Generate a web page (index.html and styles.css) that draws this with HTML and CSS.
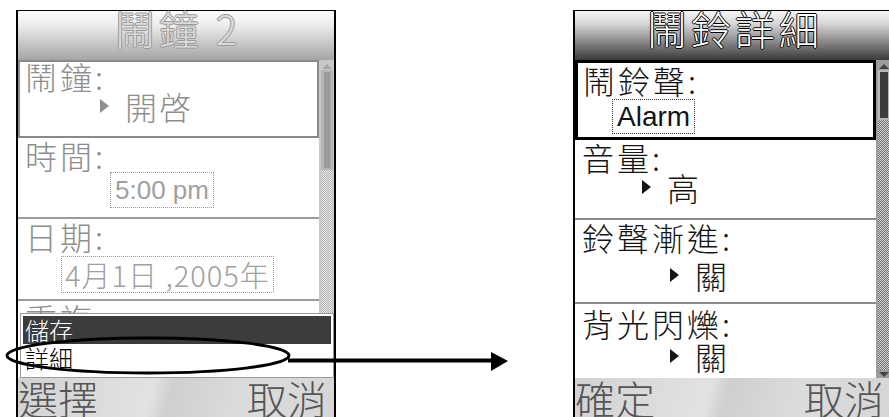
FILE: index.html
```html
<!DOCTYPE html>
<html>

<head>
    <meta charset="utf-8">
    <title>鬧鐘 2 - 鬧鈴詳細</title>
    <link rel="stylesheet" href="styles.css">
</head>

<body>
    <div class="stage">

        <!-- alarm screen with the options menu open -->
        <div class="phone dimmed">
            <div class="titlebar">鬧鐘 2</div>
            <div class="screen">
                <div class="list">
                    <div class="item selected a1">
                        <div class="label">鬧鐘:</div>
                        <div class="value"><i class="tri"></i>開啓</div>
                    </div>
                    <div class="item a2">
                        <div class="label">時間:</div>
                        <div class="value"><span class="field">5:00 pm</span></div>
                    </div>
                    <div class="item a3">
                        <div class="label">日期:</div>
                        <div class="value"><span class="field">4月1日 ,2005年</span></div>
                    </div>
                    <div class="item a4">
                        <div class="label">重複:</div>
                    </div>
                </div>
                <div class="scrollbar">
                    <div class="up"></div>
                    <div class="thumb"></div>
                    <div class="track"></div>
                </div>

                <div class="popup">
                    <div class="opt active">儲存</div>
                    <div class="opt">詳細</div>
                </div>
            </div>
            <div class="softkeys">
                <span>選擇</span>
                <span>取消</span>
            </div>
        </div>

        <!-- alarm details screen -->
        <div class="phone detail">
            <div class="titlebar">鬧鈴詳細</div>
            <div class="screen">
                <div class="list">
                    <div class="item selected b1">
                        <div class="label">鬧鈴聲:</div>
                        <div class="value"><span class="field">Alarm</span></div>
                    </div>
                    <div class="item b2">
                        <div class="label">音量:</div>
                        <div class="value"><i class="tri"></i>高</div>
                    </div>
                    <div class="item b3">
                        <div class="label">鈴聲漸進:</div>
                        <div class="value"><i class="tri"></i>關</div>
                    </div>
                    <div class="item b4">
                        <div class="label">背光閃爍:</div>
                        <div class="value"><i class="tri"></i>關</div>
                    </div>
                </div>
                <div class="scrollbar">
                    <div class="up"></div>
                    <div class="thumb"></div>
                    <div class="track"></div>
                    <div class="down"></div>
                </div>
            </div>
            <div class="softkeys">
                <span>確定</span>
                <span>取消</span>
            </div>
        </div>

        <!-- hand drawn marks: circle round the menu entry and the arrow -->
        <svg class="marks" width="889" height="417" viewBox="0 0 889 417">
            <ellipse cx="148" cy="355.5" rx="141" ry="17.5" fill="none" stroke="#000" stroke-width="3" />
            <line x1="288" y1="360.5" x2="494" y2="360.5" stroke="#000" stroke-width="4" />
            <polygon points="491,352 508,361 491,371" fill="#000" />
        </svg>
    </div>
</body>

</html>
```

FILE: styles.css
```css
html,
body {
    margin: 0;
    background: #fff;
}

body {
    width: 889px;
    height: 417px;
    overflow: hidden;
    font-family: "Noto Sans CJK TC", "Noto Sans", sans-serif;
    font-weight: 300;
}

.stage {
    position: relative;
    display: flex;
    gap: 237px;
    height: 417px;
    padding: 10px 0 0 16px;
    box-sizing: border-box;
}

.phone {
    flex: none;
    width: 320px;
    height: 407px;
    display: flex;
    flex-direction: column;
    border: 2px solid #000;
    border-top-width: 1px;
    border-bottom: none;
    box-sizing: border-box;
}

/* title bar */
.titlebar {
    flex: none;
    height: 49px;
    font-size: 40px;
    line-height: 34px;
    letter-spacing: 4px;
    padding-left: 4px;
    text-align: center;
}

.dimmed .titlebar {
    background: linear-gradient(#fbfbfb 0%, #ececec 30%, #a4a4a4 100%);
    color: #dadada;
    text-shadow: -1px 0 #9a9a9a, 1px 0 #9a9a9a, 0 -1px #9a9a9a, 0 1px #9a9a9a;
}

.detail .titlebar {
    background: linear-gradient(#f6f6f6 0%, #d8d8d8 25%, #3a3a3a 100%);
    color: #fff;
    text-shadow: -1px 0 #000, 1px 0 #000, 0 -1px #000, 0 1px #000;
}

/* list area */
.screen {
    position: relative;
    flex: none;
    height: 318px;
    display: flex;
    background: #fff;
}

.list {
    flex: 1;
    display: flex;
    flex-direction: column;
    overflow: hidden;
}

.item {
    flex: none;
    box-sizing: border-box;
    padding: 3px 0 0 7px;
    border-bottom: 2px solid #9c9c9c;
}

.label {
    font-size: 32px;
    line-height: 28px;
    letter-spacing: 3px;
    white-space: nowrap;
}

.value {
    display: flex;
    align-items: center;
    font-size: 32px;
    line-height: 32px;
    letter-spacing: 2px;
    white-space: nowrap;
}

.tri {
    width: 0;
    height: 0;
    border-left: 9px solid currentColor;
    border-top: 7px solid transparent;
    border-bottom: 7px solid transparent;
    margin-right: 16px;
}

.field {
    box-sizing: border-box;
    border: 1px dotted;
    padding: 0 4px;
    font-family: "Liberation Sans", sans-serif;
    font-weight: normal;
    letter-spacing: 0;
}

.dimmed .item {
    color: #8e8e8e;
}

.dimmed .field {
    border-color: #9a9a9a;
    color: #a0a0a0;
}

.detail .item {
    color: #141414;
    border-bottom-color: #8a8a8a;
}

.detail .field {
    border-color: #333;
}

/* item rows, left screen */
.a1 {
    height: 78px;
}

.dimmed .selected {
    border: 2px solid #8a8a8a;
    padding: 0 0 0 5px;
}

.a1 .value {
    margin-left: 75px;
}

.a2 {
    height: 81px;
}

.a2 .value {
    margin: 3px 0 0 85px;
}

.a2 .field {
    height: 36px;
    font-size: 26px;
    line-height: 34px;
}

.a3 {
    height: 82px;
}

.a3 .value {
    margin: 6px 0 0 36px;
}

.a3 .field {
    height: 37px;
    font-family: "Noto Sans CJK TC", sans-serif;
    font-weight: 300;
    font-size: 29px;
    line-height: 35px;
    letter-spacing: 1px;
    padding: 0 3px;
}

.a4 {
    flex: 1;
    border-bottom: none;
}

/* item rows, right screen */
.detail .selected {
    border: 3px solid #000;
    padding: 3px 0 0 5px;
}

.b1 {
    height: 80px;
}

.b1 .value {
    margin: 5px 0 0 29px;
}

.b1 .field {
    height: 35px;
    font-size: 28px;
    line-height: 33px;
}

.b2 {
    height: 80px;
}

.b2 .value {
    margin: 0 0 0 60px;
}

.b3 {
    height: 84px;
}

.b3 .value {
    margin: 8px 0 0 88px;
}

.b4 {
    flex: 1;
    border-bottom: none;
    padding-top: 5px;
}

.b4 .value {
    margin: 3px 0 0 88px;
}

/* scroll bars */
.scrollbar {
    flex: none;
    width: 15px;
    display: flex;
    flex-direction: column;
    box-sizing: border-box;
    padding: 2px 1px 0 2px;
}

.up,
.down {
    flex: none;
    height: 8px;
    display: flex;
    justify-content: center;
    align-items: center;
}

.up::before {
    content: "";
    border-bottom: 5px solid;
    border-left: 5px solid transparent;
    border-right: 5px solid transparent;
}

.down::before {
    content: "";
    border-top: 5px solid;
    border-left: 5px solid transparent;
    border-right: 5px solid transparent;
}

.thumb {
    flex: none;
    box-sizing: border-box;
}

.track {
    flex: 1;
}

.dimmed .scrollbar {
    background: #c8c8c8;
    color: #a8a8a8;
}

.dimmed .thumb {
    height: 100px;
    border: 2px solid #b4b4b4;
    border-left-width: 3px;
    border-right-width: 3px;
    background: #9a9a9a;
}

.dimmed .track {
    background: repeating-conic-gradient(#b4b4b4 0 25%, #e8e8e8 0 50%) 0 0 / 2px 2px;
}

.detail .scrollbar {
    background: #9c9c9c;
    color: #444;
}

.detail .thumb {
    height: 50px;
    border: 2px solid #b8b8b8;
    background: #3c3c3c;
}

.detail .track {
    background: repeating-conic-gradient(#6e6e6e 0 25%, #d4d4d4 0 50%) 0 0 / 2px 2px;
}

/* options menu over the list */
.popup {
    position: absolute;
    left: 2px;
    top: 253px;
    width: 314px;
    height: 65px;
    box-sizing: border-box;
    border: 1px solid #9a9a9a;
    padding: 2px;
    background: #fff;
    font-size: 24px;
}

.opt {
    height: 29px;
    line-height: 28px;
    padding-left: 2px;
    color: #000;
}

.opt.active {
    height: 28px;
    background: #3c3c3c;
    color: #fff;
}

/* soft keys */
.softkeys {
    flex: 1;
    display: flex;
    justify-content: space-between;
    overflow: hidden;
    padding-right: 7px;
    font-size: 40px;
    line-height: 40px;
    color: #555;
    background: linear-gradient(105deg, #d2d2d2 0%, #e2e2e2 42%, #cfcfcf 48%, #dcdcdc 70%, #d6d6d6 100%);
}

.marks {
    position: absolute;
    left: 0;
    top: 0;
    pointer-events: none;
}
```
